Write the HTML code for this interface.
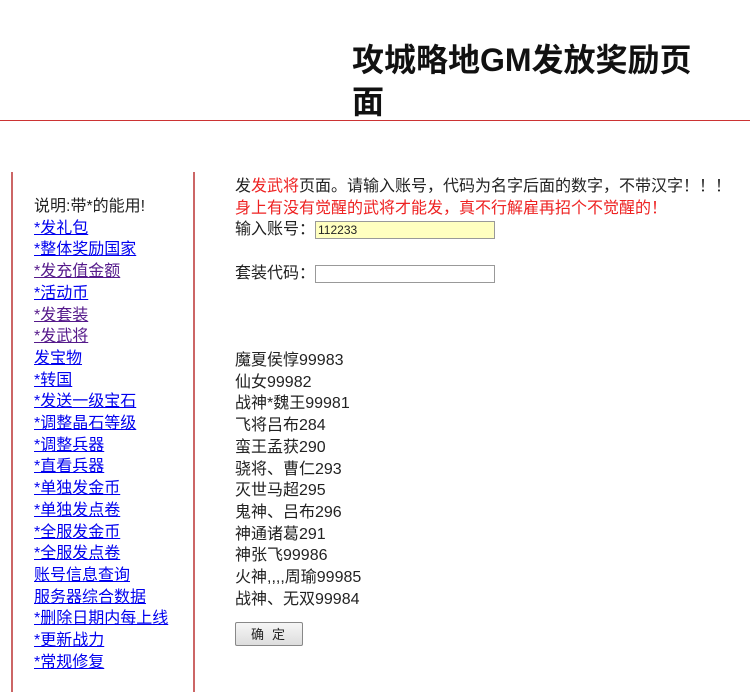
<!DOCTYPE html>
<html><head><meta charset="utf-8"><style>
body{margin:0;width:750px;height:692px;overflow:hidden;background:#fff;font-family:"Liberation Sans","Noto Sans CJK SC",sans-serif;font-size:16px;color:#222;position:relative}
h1{position:absolute;left:352px;top:39px;margin:0;font-size:32px;line-height:42px;font-weight:bold;width:362px;color:#111}
.hr{position:absolute;left:0;top:120px;width:750px;height:1px;background:#c33}
.vl{position:absolute;top:172px;height:520px;width:2px;background:#c66}
.left{position:absolute;left:34px;top:196px;line-height:21.7px}
.left a{color:#00e;text-decoration:underline;display:block}
.left a.v{color:#551a8b}
.r{position:absolute;left:235px;line-height:21.7px}
.red{color:#e22}
.inp{display:inline-block;vertical-align:middle;width:180px;height:18px;border:1px solid #999;font-size:12px;line-height:17px;padding-left:2px;box-sizing:border-box}
.btn{position:absolute;left:235px;top:622px;width:68px;height:24px;border:1px solid #888;border-radius:2px;background:linear-gradient(#f6f6f6,#ddd);font-size:13px;text-align:center;line-height:23px;box-sizing:border-box;letter-spacing:8px;padding-left:6px}
</style></head><body>
<h1>攻城略地GM发放奖励页面</h1>
<div class="hr"></div>
<div class="vl" style="left:11px"></div>
<div class="vl" style="left:193px"></div>
<div class="left">说明:带*的能用!
<a>*发礼包</a><a>*整体奖励国家</a><a class="v">*发充值金额</a><a>*活动币</a><a class="v">*发套装</a><a class="v">*发武将</a><a>发宝物</a><a>*转国</a><a>*发送一级宝石</a><a>*调整晶石等级</a><a>*调整兵器</a><a>*直看兵器</a><a>*单独发金币</a><a>*单独发点卷</a><a>*全服发金币</a><a>*全服发点卷</a><a>账号信息查询</a><a>服务器综合数据</a><a>*删除日期内每上线</a><a>*更新战力</a><a>*常规修复</a>
</div>
<div class="r" style="top:176px;white-space:nowrap">发<span class="red">发武将</span>页面。请输入账号，代码为名字后面的数字，不带汉字！！！<br><span class="red">身上有没有觉醒的武将才能发，真不行解雇再招个不觉醒的！</span><br>输入账号：<span class="inp" style="background:#ffffc0">112233</span></div>
<div class="r" style="top:263px">套装代码：<span class="inp"></span></div>
<div class="r" style="top:350px">魔夏侯惇99983<br>仙女99982<br>战神*魏王99981<br>飞将吕布284<br>蛮王孟获290<br>骁将、曹仁293<br>灭世马超295<br>鬼神、吕布296<br>神通诸葛291<br>神张飞99986<br>火神,,,,周瑜99985<br>战神、无双99984</div>
<div class="btn">确定</div>
</body></html>
